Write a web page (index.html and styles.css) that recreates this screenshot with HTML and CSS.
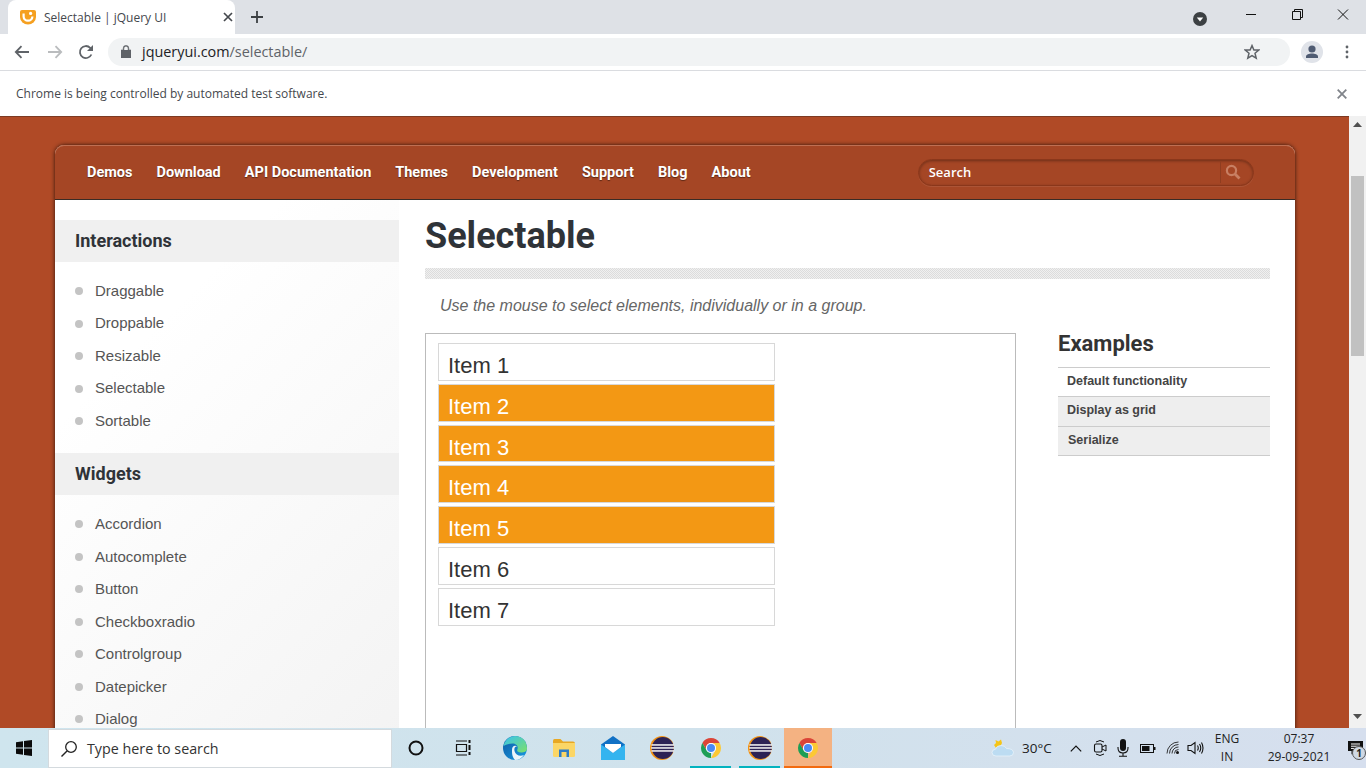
FILE: index.html
```html
<!DOCTYPE html>
<html lang="en">
<head>
<meta charset="utf-8">
<title>Selectable | jQuery UI</title>
<link rel="stylesheet" href="styles.css">
</head>
<body>
<svg class="defs" width="0" height="0" aria-hidden="true">
  <symbol id="chrome" viewBox="0 0 24 24">
    <path fill="#db4437" d="M3.34 7A10 10 0 0 1 20.66 7H12A5 5 0 0 0 7.67 14.5Z"/>
    <path fill="#fcc934" d="M20.66 7A10 10 0 0 1 12 22L16.33 14.5A5 5 0 0 0 12 7Z"/>
    <path fill="#1e9e55" d="M12 22A10 10 0 0 1 3.34 7L7.67 14.5A5 5 0 0 0 12 17Z"/>
    <circle cx="12" cy="12" r="5" fill="#fff"/>
    <circle cx="12" cy="12" r="4" fill="#4a8af4"/>
  </symbol>
  <symbol id="eclipse" viewBox="0 0 24 24">
    <circle cx="12" cy="12" r="12" fill="#f29111"/>
    <circle cx="12.8" cy="12" r="11" fill="#2c2255"/>
    <rect x="1.5" y="8.2" width="22.5" height="1.5" fill="#f7f7f7"/>
    <rect x="1.2" y="11.2" width="22.8" height="1.5" fill="#f7f7f7"/>
    <rect x="1.5" y="14.2" width="22.5" height="1.5" fill="#f7f7f7"/>
  </symbol>
</svg>

<header class="tabstrip">
  <div class="tab">
    <svg class="favicon" viewBox="0 0 16 16"><path fill="#f5a021" d="M0 3Q0 1 2 1H14Q16 1 16 3V8A8 7.5 0 0 1 0 8Z"/><path fill="none" stroke="#fff" stroke-width="2.2" d="M3.6 4.5V7.5A4.4 4.2 0 0 0 12.4 7.5"/><circle cx="10.6" cy="4.4" r="1.6" fill="#fff"/></svg>
    <span class="tab-title">Selectable | jQuery UI</span>
    <svg class="tab-close" viewBox="0 0 10 10"><path d="M1 1L9 9M9 1L1 9" stroke="#45484d" stroke-width="1.7"/></svg>
  </div>
  <svg class="new-tab" viewBox="0 0 12 12"><path d="M6 0V12M0 6H12" stroke="#3c4043" stroke-width="1.8"/></svg>
  <svg class="tab-search" viewBox="0 0 14 14"><circle cx="7" cy="7" r="7" fill="#3c4043"/><path d="M3.8 5.6H10.2L7 9.6Z" fill="#fff"/></svg>
  <div class="win-controls">
    <svg viewBox="0 0 46 30"><path d="M18 14.5H28" stroke="#111" stroke-width="1"/></svg>
    <svg viewBox="0 0 46 30"><path d="M18.5 11.5H26.5V19.5H18.5ZM20.5 11.5V9.5H28.5V17.5H26.5" fill="none" stroke="#111" stroke-width="1"/></svg>
    <svg viewBox="0 0 46 30"><path d="M18 9.5L28 19.5M28 9.5L18 19.5" stroke="#111" stroke-width="1"/></svg>
  </div>
</header>

<nav class="toolbar">
  <svg class="tb-icon back" viewBox="0 0 16 14"><path d="M15 7H2M7.5 1.2L1.8 7L7.5 12.8" fill="none" stroke="#5f6368" stroke-width="1.8"/></svg>
  <svg class="tb-icon fwd" viewBox="0 0 16 14"><path d="M1 7H14M8.5 1.2L14.2 7L8.5 12.8" fill="none" stroke="#babcbe" stroke-width="1.8"/></svg>
  <svg class="tb-icon reload" viewBox="0 0 16 16"><path d="M13.4 10.5A6 6 0 1 1 12.2 3.8L14 5.6" fill="none" stroke="#5f6368" stroke-width="1.8"/><path d="M15 1V7H9Z" fill="#5f6368"/></svg>
  <div class="omnibox">
    <svg class="lock" viewBox="0 0 10 13"><path d="M0 5H10V13H0ZM2.2 5V3.2A2.8 2.8 0 0 1 7.8 3.2V5" fill="#5f6368" stroke="#5f6368" stroke-width=".6" fill-rule="nonzero"/><path d="M3.2 5V3.2A1.8 1.8 0 0 1 6.8 3.2V5Z" fill="#f1f3f4"/></svg>
    <span class="url"><span class="url-host">jqueryui.com</span>/selectable/</span>
    <svg class="star" viewBox="0 0 16 16"><path d="M8 1.6L9.9 6H14.8L11 9.2L12.2 14.2L8 11.6L3.8 14.2L5 9.2L1.2 6H6.1Z" fill="none" stroke="#5f6368" stroke-width="1.5"/></svg>
  </div>
  <div class="avatar"><svg viewBox="0 0 22 22"><circle cx="11" cy="8" r="3.6" fill="#4f5b72"/><path d="M5 17V15.6C5 13.6 8 12.6 11 12.6S17 13.6 17 15.6V17Z" fill="#4f5b72"/></svg></div>
  <svg class="dots" viewBox="0 0 4 14"><circle cx="2" cy="2" r="1.4" fill="#5f6368"/><circle cx="2" cy="7" r="1.4" fill="#5f6368"/><circle cx="2" cy="12" r="1.4" fill="#5f6368"/></svg>
</nav>

<div class="infobar">
  <span>Chrome is being controlled by automated test software.</span>
  <svg class="info-close" viewBox="0 0 10 10"><path d="M.7 .7L9.3 9.3M9.3 .7L.7 9.3" stroke="#80848a" stroke-width="1.8"/></svg>
</div>

<div class="viewport">
  <main class="page">
    <div class="wrapper">
      <div class="site-nav">
        <a>Demos</a><a>Download</a><a>API Documentation</a><a>Themes</a><a>Development</a><a>Support</a><a>Blog</a><a>About</a>
        <div class="site-search">
          <span class="search-label">Search</span>
          <span class="search-btn"><svg viewBox="0 0 16 16"><circle cx="6.5" cy="6.5" r="4.6" fill="none" stroke="#c87f63" stroke-width="2.2"/><path d="M10 10L14.5 14.5" stroke="#c87f63" stroke-width="2.8"/></svg></span>
        </div>
      </div>
      <div class="columns">
        <aside class="sidebar">
          <h3>Interactions</h3>
          <ul>
            <li>Draggable</li><li>Droppable</li><li>Resizable</li><li>Selectable</li><li>Sortable</li>
          </ul>
          <h3>Widgets</h3>
          <ul>
            <li>Accordion</li><li>Autocomplete</li><li>Button</li><li>Checkboxradio</li><li>Controlgroup</li><li>Datepicker</li><li>Dialog</li><li>Menu</li>
          </ul>
        </aside>
        <section class="content">
          <h1>Selectable</h1>
          <div class="hatch"></div>
          <p class="desc">Use the mouse to select elements, individually or in a group.</p>
          <div class="demo-row">
            <div class="demo">
              <ol class="items">
                <li>Item 1</li>
                <li class="sel">Item 2</li>
                <li class="sel">Item 3</li>
                <li class="sel">Item 4</li>
                <li class="sel">Item 5</li>
                <li>Item 6</li>
                <li>Item 7</li>
              </ol>
            </div>
            <div class="examples">
              <h2>Examples</h2>
              <ul>
                <li class="first">Default functionality</li>
                <li>Display as grid</li>
                <li class="nudge">Serialize</li>
              </ul>
            </div>
          </div>
        </section>
      </div>
    </div>
  </main>
  <div class="scrollbar">
    <svg class="arrow" viewBox="0 0 9 5"><path d="M0 5L4.5 0L9 5Z" fill="#505050"/></svg>
    <div class="thumb"></div>
    <svg class="arrow down" viewBox="0 0 9 5"><path d="M0 0L4.5 5L9 0Z" fill="#505050"/></svg>
  </div>
</div>

<footer class="taskbar">
  <svg class="start" viewBox="0 0 16 16"><path fill="#0b0b0b" d="M0 2.2L7 1.2V7.5H0ZM8 1L16 0V7.5H8ZM0 8.5H7V14.8L0 13.8ZM8 8.5H16V16L8 15Z"/></svg>
  <div class="tb-search">
    <svg viewBox="0 0 18 18"><circle cx="11" cy="7" r="5.3" fill="none" stroke="#222" stroke-width="1.3"/><path d="M7 11L1.5 16.5" stroke="#222" stroke-width="1.4"/></svg>
    <span>Type here to search</span>
  </div>
  <svg class="cortana" viewBox="0 0 16 16"><circle cx="8" cy="8" r="6.5" fill="none" stroke="#111" stroke-width="2"/></svg>
  <svg class="taskview" viewBox="0 0 18 16"><path d="M2 1H13M2 15H13M2.5 4.5H12.5V11.5H2.5Z" fill="none" stroke="#111" stroke-width="1.2"/><path d="M15.5 0V3M15.5 5V10M15.5 12V15" stroke="#111" stroke-width="2"/></svg>
  <div class="apps">
    <div class="app"><svg viewBox="0 0 24 24"><defs><linearGradient id="eb" x1="0" y1="0" x2="1" y2="1"><stop offset="0" stop-color="#0c59a4"/><stop offset="1" stop-color="#1b9de2"/></linearGradient><linearGradient id="eg" x1="0" y1="0" x2="1" y2="1"><stop offset="0" stop-color="#35c1f1"/><stop offset="1" stop-color="#7ee06a"/></linearGradient></defs><circle cx="12" cy="12" r="12" fill="url(#eb)"/><path d="M0.5 10C2 3 8 0 12 0C19 0 24 5 24 12.5C24 15.5 21 16.5 18 16.5C14.5 16.5 13.5 15 14.5 13C15.5 10 13 7.5 9.5 7.5C5 7.5 2 9 0.5 10Z" fill="url(#eg)"/><path d="M9 14C9 10 12 9 14 10.5C11.5 10.5 11 12.5 11.5 15C12.5 19 17 21 21 19C19 22 15.5 24 12 24C9 21 9 17 9 14Z" fill="#fff" opacity=".92"/></svg></div>
    <div class="app"><svg viewBox="0 0 22 18"><path d="M0 2Q0 0 1.5 0H7.5L10 2.5H20Q22 2.5 22 4.5V6H0Z" fill="#e8a823"/><path d="M0 4H22V16.5Q22 18 20.5 18H1.5Q0 18 0 16.5Z" fill="#fbd666"/><path d="M6 10.5H16V18H13.5V13H8.5V18H6Z" fill="#2f7cc4"/></svg></div>
    <div class="app"><svg viewBox="0 0 24 24"><path d="M0 8.5L12 0L24 8.5V24H0Z" fill="#1171c5"/><path d="M0 8.5L12 17L24 8.5V24H0Z" fill="#34b4ef"/><path d="M4 8H20V11L12 17L4 11Z" fill="#fff"/></svg></div>
    <div class="app"><svg viewBox="0 0 24 24"><use href="#eclipse"/></svg></div>
    <div class="app running"><svg viewBox="0 0 24 24"><use href="#chrome"/></svg></div>
    <div class="app running"><svg viewBox="0 0 24 24"><use href="#eclipse"/></svg></div>
    <div class="app active"><svg viewBox="0 0 24 24"><use href="#chrome"/></svg></div>
  </div>
  <div class="tray">
    <svg class="weather" viewBox="0 0 24 20"><path d="M3 7L5 5L4.5 2L7.5 3.5L10 1.5L11 5L9 9L5 10Z" fill="#f5c518"/><path d="M5 18Q1 18 1 14.5Q1 11.5 4.500 11.200Q5.500 7.500 10 7.500Q14 7.500 15.500 10.500Q22 10.500 22.500 14.500Q22.500 18 18.500 18Z" fill="#bcdcf2" stroke="#e8f3fa" stroke-width=".8"/></svg>
    <span class="temp">30°C</span>
    <svg class="t-chev" viewBox="0 0 12 7"><path d="M.8 6.300L6 1L11.200 6.300" fill="none" stroke="#111" stroke-width="1.200"/></svg>
    <svg class="t-meet" viewBox="0 0 14 18"><path d="M3 3Q7 0 11 3M3 15Q7 18 11 15" fill="none" stroke="#111"/><rect x="1.500" y="5" width="7.500" height="8" rx="1.500" fill="none" stroke="#111" stroke-width="1.100"/><path d="M9 8L13 6V12L9 10" fill="none" stroke="#111"/></svg>
    <svg class="t-mic" viewBox="0 0 12 18"><rect x="3" y="0" width="6" height="12" rx="3" fill="#111"/><path d="M1 8V9Q1 14 6 14Q11 14 11 9V8M6 14V17M2 17.300H10" fill="none" stroke="#111" stroke-width="1.100"/></svg>
    <svg class="t-batt" viewBox="0 0 16 9"><rect x=".5" y=".5" width="13" height="8" fill="none" stroke="#111"/><rect x="2" y="2" width="7.500" height="5" fill="#111"/><rect x="14" y="3" width="1.500" height="3" fill="#111"/></svg>
    <svg class="t-wifi" viewBox="0 0 14 14"><path d="M1 12.500A11.500 11.500 0 0 1 12.500 1M3.500 12.500A9 9 0 0 1 12.500 3.500M6 12.500A6.500 6.500 0 0 1 12.500 6M8.500 12.500A4 4 0 0 1 12.500 8.500" fill="none" stroke="#222" stroke-width=".9"/><circle cx="11.500" cy="11.500" r="1.500" fill="#111"/></svg>
    <svg class="t-vol" viewBox="0 0 17 14"><path d="M1 4.500H4L8 1.500V12.500L4 9.500H1Z" fill="none" stroke="#111" stroke-width="1.100"/><path d="M10.500 4.500Q12 7 10.500 9.500M12.500 3Q15 7 12.500 11M14.500 1.500Q17.500 7 14.500 12.500" fill="none" stroke="#111" stroke-width="1.100"/></svg>
    <div class="lang"><span>ENG</span><span>IN</span></div>
    <div class="clock"><span>07:37</span><span>29-09-2021</span></div>
    <div class="notify">
      <svg viewBox="0 0 16 14"><path d="M0 0H15V10H7L3.500 13.500V10H0Z" fill="#111"/><path d="M3 3H12M3 5.200H12M3 7.400H9" stroke="#fff" stroke-width="1"/></svg>
      <span class="badge">1</span>
    </div>
  </div>
</footer>
</body>
</html>
```

FILE: styles.css
```css
* { box-sizing: border-box; }
html, body { margin: 0; padding: 0; }
body { width: 1366px; height: 768px; overflow: hidden; display: flex; flex-direction: column; font-family: "Liberation Sans", Arial, sans-serif; background: #fff; }
.defs { position: absolute; }
svg { display: block; flex: none; }

/* browser chrome */
.tabstrip { height: 34px; background: #dee1e6; display: flex; align-items: center; flex: none; }
.tab { width: 240px; height: 34px; margin-left: 8px; background: #fff; border-radius: 8px 8px 0 0; display: flex; align-items: center; padding-left: 12px; }
.favicon { width: 16px; height: 16px; }
.tab-title { margin-left: 8px; font: 12px "Open Sans", sans-serif; color: #45484d; width: 172px; white-space: nowrap; }
.tab-close { width: 10px; height: 10px; margin-left: 7px; }
.new-tab { width: 12px; height: 12px; margin-left: 16px; }
.tab-search { width: 14px; height: 14px; margin-left: 930px; margin-top: 3px; }
.win-controls { display: flex; margin-left: 21px; margin-top: -4px; }
.win-controls svg { width: 46px; height: 30px; }

.toolbar { height: 37px; background: #fff; border-bottom: 1px solid #dadce0; display: flex; align-items: center; flex: none; padding-bottom: 1px; }
.tb-icon { width: 16px; height: 14px; }
.back { margin-left: 14px; }
.fwd { margin-left: 17px; }
.reload { height: 16px; margin-left: 15px; }
.omnibox { width: 1182px; height: 28px; margin-left: 14px; background: #f1f3f4; border-radius: 14px; display: flex; align-items: center; padding-left: 13px; }
.lock { width: 10px; height: 13px; }
.url { margin-left: 11px; font: 14.4px "Open Sans", sans-serif; color: #5f6368; white-space: nowrap; width: 1110px; }
.url-host { color: #202124; }
.star { width: 16px; height: 16px; margin-left: -8px; }
.avatar { width: 22px; height: 22px; margin-left: 11px; border-radius: 50%; background: #e0e3e9; }
.avatar svg { width: 22px; height: 22px; }
.dots { width: 4px; height: 14px; margin-left: 22px; }

.infobar { height: 45px; background: #fff; display: flex; align-items: center; padding-left: 16px; font: 12px "Open Sans", sans-serif; color: #45484d; flex: none; justify-content: space-between; padding-right: 19px; }
.info-close { width: 10px; height: 10px; }

/* page */
.viewport { flex: 1; min-height: 0; display: flex; overflow: hidden; box-shadow: inset 0 1px 0 #7c3a22; }
.page { flex: 1; min-width: 0; background: #b04a26; padding: 28px 0 0 55px; overflow: hidden; border-top: 1px solid #7c3a22; }
.wrapper { width: 1240px; box-shadow: 0 0 4px rgba(0,0,0,.75); border-radius: 9px 9px 0 0; background: #fff; }
.site-nav { height: 55px; background: #a54625; border-radius: 9px 9px 0 0; border-bottom: 1px solid #3a2c26; box-shadow: inset 0 1px 0 #bf6f52; display: flex; align-items: center; padding-left: 32px; gap: 24px; }
.site-nav a { font: 700 14.5px Roboto, sans-serif; color: #fff; text-shadow: 0 1px 1px rgba(0,0,0,.45); white-space: nowrap; }
.site-search { width: 336px; height: 27px; margin-left: 143px; border: 1px solid #8a371b; border-radius: 14px; box-shadow: inset 0 1px 3px rgba(0,0,0,.35), 0 1px 0 rgba(255,255,255,.08); display: flex; align-items: center; justify-content: space-between; padding: 0 7px 0 10px; }
.search-label { font: 600 13px "Open Sans", sans-serif; color: #fff; }
.search-btn { width: 26px; height: 22px; border-left: 1px solid #8f3d20; display: flex; align-items: center; justify-content: center; }
.search-btn svg { width: 16px; height: 16px; }

.columns { display: flex; height: 560px; overflow: hidden; }
.sidebar { width: 344px; flex: none; padding-top: 20px; background: linear-gradient(135deg, #fff 25%, #f3f3f3 100%); }
.sidebar h3 { margin: 0; height: 42px; line-height: 42px; padding-left: 20px; background: #f0f0f0; font: 700 18px/42px Roboto, sans-serif; color: #2f3338; }
.sidebar ul { list-style: none; margin: 0; padding: 12.75px 0 16px 20px; }
.sidebar li { height: 32.5px; line-height: 32.5px; font-size: 15px; color: #555; display: flex; align-items: center; gap: 12px; }
.sidebar li::before { content: ""; width: 8px; height: 8px; border-radius: 50%; background: #c4c4c4; }

.content { flex: 1; min-width: 0; padding: 16px 25px 0 26px; }
h1 { margin: 0; height: 40px; font: 700 36px/40px Roboto, sans-serif; color: #2f3338; }
.hatch { height: 11px; margin-top: 12px; background: repeating-conic-gradient(#dcdcdc 0 25%, #f0f0f0 0 50%) 0 0 / 2px 2px; }
.desc { margin: 17px 0 17px 15px; font: italic 16px/20px "Liberation Sans", sans-serif; color: #666; }
.demo-row { display: flex; gap: 42px; align-items: flex-start; }
.demo { width: 591px; height: 600px; border: 1px solid #bbb; padding: 9px 12px; flex: none; }
.items { list-style: none; margin: 0; padding: 0; width: 337px; display: flex; flex-direction: column; gap: 3px; }
.items li { height: 37.8px; border: 1px solid #d8d8d8; padding: 3px 0 0 9px; font-size: 22px; line-height: 37px; color: #333; }
.items li.sel { background: #f39814; color: #fff; }
.examples { width: 212px; flex: none; }
.examples h2 { margin: 0 0 12px; font: 700 22px/22px Roboto, sans-serif; color: #333; }
.examples ul { list-style: none; margin: 0; padding: 0; border-bottom: 1px solid #ccc; }
.examples li { height: 29.4px; border-top: 1px solid #ccc; background: #eee; padding-left: 9px; font-weight: 700; font-size: 12.5px; line-height: 27px; color: #444; }
.examples li.first { background: #fff; }
.examples li.nudge { padding-left: 10px; }

.scrollbar { width: 17px; flex: none; background: #f1f1f1; display: flex; flex-direction: column; align-items: center; padding-top: 6px; }
.arrow { width: 9px; height: 5px; }
.thumb { width: 13px; height: 180px; background: #c1c1c1; margin-top: 49px; }
.arrow.down { margin-top: 358px; }

/* taskbar */
.taskbar { height: 40px; flex: none; background: linear-gradient(90deg, #cfe5ee 0%, #d0e2ec 50%, #d6dfee 100%); display: flex; align-items: center; position: relative; }
.start { width: 16px; height: 16px; margin-left: 16px; }
.tb-search { width: 344px; height: 39px; margin-left: 16px; margin-top: 1px; background: #fff; border: 1px solid #d4dade; display: flex; align-items: center; padding-left: 11px; font: 14.300px "Open Sans", sans-serif; color: #333; gap: 9px; }
.tb-search svg { width: 18px; height: 18px; }
.cortana { width: 16px; height: 16px; margin-left: 16px; }
.taskview { width: 18px; height: 16px; margin-left: 30px; }
.apps { display: flex; margin-left: 18px; height: 40px; }
.app { width: 49px; height: 40px; display: flex; align-items: center; justify-content: center; border-bottom: 2px solid transparent; padding-top: 1px; background-clip: padding-box; }
.app svg { width: 24px; height: 24px; }
.app:nth-child(2) svg { width: 22px; height: 18px; }
.app.running { border-image: linear-gradient(90deg, transparent 10%, #03b3bf 10% 90%, transparent 90%) 1; }
.app.active { width: 48px; background: #f4b282; border-bottom-color: #f26a0f; }
.tray { display: flex; align-items: center; margin-left: 159px; height: 40px; }
.weather { width: 24px; height: 20px; }
.temp { font: 13.500px "Open Sans", sans-serif; color: #222; margin-left: 7px; width: 32px; white-space: nowrap; }
.t-chev { width: 12px; height: 7px; margin-left: 16px; }
.t-meet { width: 14px; height: 18px; margin-left: 11px; }
.t-mic { width: 12px; height: 18px; margin-left: 10px; }
.t-batt { width: 16px; height: 9px; margin-left: 11px; }
.t-wifi { width: 14px; height: 14px; margin-left: 10px; }
.t-vol { width: 17px; height: 14px; margin-left: 7px; }
.lang { width: 26px; margin-left: 10px; display: flex; flex-direction: column; align-items: center; font: 12px/18px "Open Sans", sans-serif; color: #222; }
.clock { width: 72px; margin-left: 23px; display: flex; flex-direction: column; align-items: center; font: 12px/18px "Open Sans", sans-serif; color: #222; }
.notify { position: relative; margin-left: 13px; width: 16px; height: 14px; }
.notify svg { width: 16px; height: 14px; }
.badge { position: absolute; left: 4px; top: 5px; width: 14px; height: 14px; border-radius: 50%; border: 1px solid #555; background: #cfd8e4; font: 700 10px/12px "Open Sans", sans-serif; color: #222; text-align: center; }
```
